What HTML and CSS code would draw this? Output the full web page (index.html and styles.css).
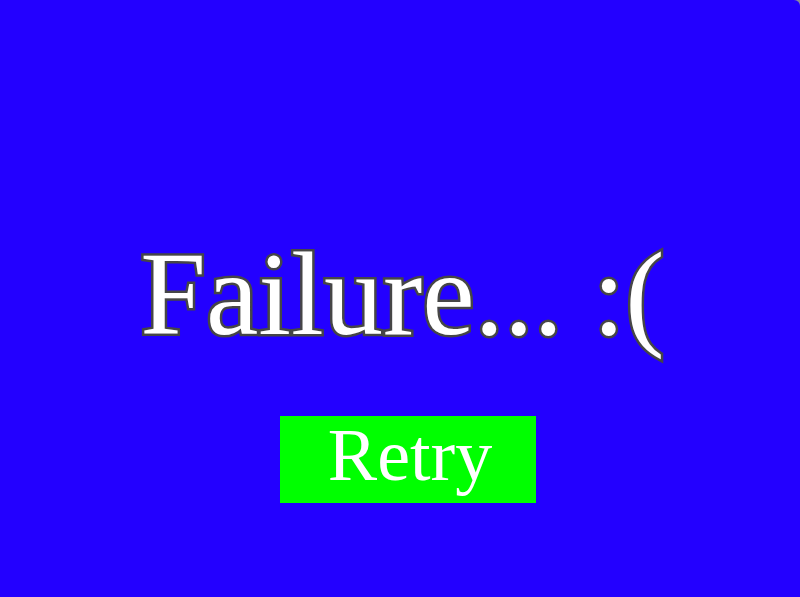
FILE: index.html
```html
<!DOCTYPE html>
<html lang="en">

<head>
    <meta charset="UTF-8">
    <meta name="viewport" content="width=device-width, initial-scale=1.0">
    <title>Failure</title>
    <link rel="stylesheet" href="styles.css">
</head>

<body>
    <div class="screen">
        <h1 class="title">Failure... :(</h1>
        <button class="retry">Retry</button>
    </div>
</body>

</html>
```

FILE: styles.css
```css
html {
    background-color: #8a8a9a;
}

body {
    margin: 0;
    font-family: "Liberation Serif", "Times New Roman", serif;
}

.screen {
    height: 597px;
    box-sizing: border-box;
    padding-top: 142px;
    background-color: #2300ff;
    border-top-right-radius: 6px;
    display: flex;
    flex-direction: column;
    align-items: center;
    justify-content: center;
}

.title {
    margin: 0;
    margin-left: 5px;
    font-size: 118px;
    font-weight: normal;
    line-height: 1;
    color: white;
    -webkit-text-stroke: 5px #464646;
    paint-order: stroke fill;
}

.retry {
    margin-top: 62px;
    margin-left: 16px;
    width: 256px;
    height: 87px;
    box-sizing: border-box;
    padding: 0 0 8px 4px;
    border: none;
    background-color: #00ff00;
    color: white;
    font-family: "Liberation Serif", "Times New Roman", serif;
    font-size: 74px;
    line-height: 79px;
    cursor: pointer;
}
```
